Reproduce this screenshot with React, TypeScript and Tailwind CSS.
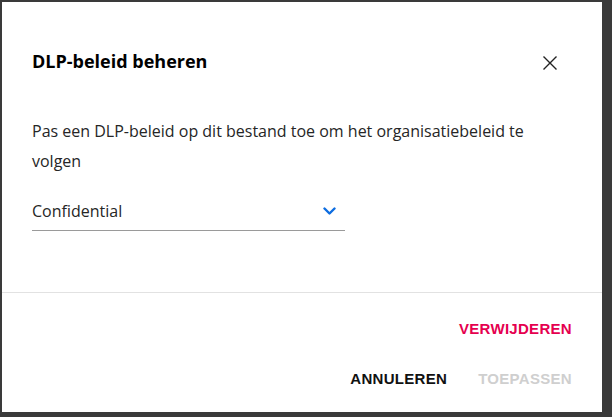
import React, { useState } from 'react';

export default function App() {
  const [policy] = useState('Confidential');

  return (
    <div className="w-[612px] h-[417px] bg-[#3a3a3a] pt-[2px] pl-[2px] overflow-hidden">
      <div className="w-[600px] h-[410px] bg-white flex flex-col font-['Open_Sans',sans-serif] text-[#222]">
        {/* Header */}
        <div className="flex justify-between items-start pt-[47px] pl-[30px] pr-[44px]">
          <h2 className="text-[18px] leading-[24px] font-bold text-black">DLP-beleid beheren</h2>
          <button className="mt-[6px] w-[16px] h-[16px] flex items-center justify-center text-[#222]">
            <svg width="16" height="16" viewBox="0 0 16 16" fill="none" stroke="currentColor" strokeWidth="1.4">
              <path d="M1.5 1.5L14.5 14.5M14.5 1.5L1.5 14.5" />
            </svg>
          </button>
        </div>

        {/* Body */}
        <div className="pl-[30px] pr-[30px] pt-[43px]">
          <p className="text-[16px] leading-[30px] text-[#262626]">
            Pas een DLP-beleid op dit bestand toe om het organisatiebeleid te volgen
          </p>
          <div className="mt-[15px] w-[313px] h-[40px] flex items-center justify-between border-b border-[#9a9a9a]">
            <span className="text-[16px] text-[#262626]">{policy}</span>
            <svg className="mr-[9px]" width="13" height="8" viewBox="0 0 13 8" fill="none" stroke="#0d6de0" strokeWidth="2.4" strokeLinecap="round" strokeLinejoin="round">
              <path d="M1.5 1.5L6.5 6.5L11.5 1.5" />
            </svg>
          </div>
        </div>

        {/* Divider */}
        <div className="mt-[61px] border-t border-[#e2e2e2]" />

        {/* Footer */}
        <div className="flex flex-col items-end pr-[30px] font-['Liberation_Sans',Arial,sans-serif] text-[15px] font-bold tracking-[0.3px]">
          <button className="mt-[26px] leading-[20px] uppercase text-[#e5004f]">Verwijderen</button>
          <div className="mt-[30px] flex gap-[31px]">
            <button className="leading-[20px] uppercase text-[#111]">Annuleren</button>
            <button className="leading-[20px] uppercase text-[#cfcfcf]" disabled>Toepassen</button>
          </div>
        </div>
      </div>
    </div>
  );
}
